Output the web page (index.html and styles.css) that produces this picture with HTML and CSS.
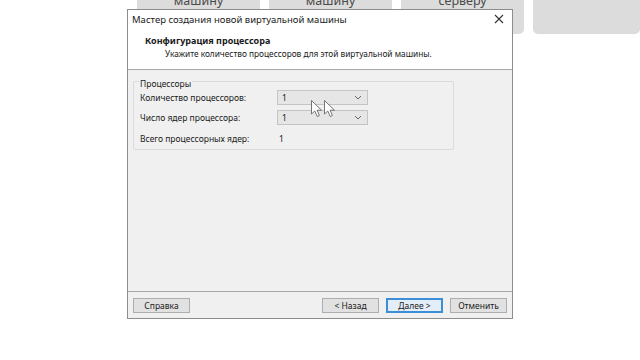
FILE: index.html
```html
<!DOCTYPE html>
<html lang="ru">
<head>
  <meta charset="UTF-8" />
  <title>Мастер создания новой виртуальной машины</title>
  <link rel="stylesheet" href="styles.css">
</head>
<body>

  <!-- плитки на заднем плане -->
  <div class="tiles">
    <div class="tile"><span>машину</span></div>
    <div class="tile"><span>машину</span></div>
    <div class="tile"><span>серверу</span></div>
    <div class="tile"></div>
  </div>

  <div class="wizard">
    <div class="wiz-title">
      <span>Мастер создания новой виртуальной машины</span>
      <svg class="wiz-close" width="10" height="10" viewBox="0 0 10 10">
        <path d="M1 1 L9 9 M9 1 L1 9" stroke="#333" stroke-width="1.1" fill="none"/>
      </svg>
    </div>

    <div class="wiz-head">
      <div class="wiz-head-title">Конфигурация процессора</div>
      <div class="wiz-head-sub">Укажите количество процессоров для этой виртуальной машины.</div>
    </div>

    <div class="wiz-body">
      <fieldset class="group">
        <legend>Процессоры</legend>
        <div class="row">
          <span class="row-label">Количество процессоров:</span>
          <div class="combo"><span>1</span><svg width="8" height="5" viewBox="0 0 8 5"><path d="M1 1 L4 4 L7 1" stroke="#666" fill="none"/></svg></div>
        </div>
        <div class="row">
          <span class="row-label">Число ядер процессора:</span>
          <div class="combo"><span>1</span><svg width="8" height="5" viewBox="0 0 8 5"><path d="M1 1 L4 4 L7 1" stroke="#666" fill="none"/></svg></div>
        </div>
        <div class="row">
          <span class="row-label">Всего процессорных ядер:</span>
          <span class="row-value">1</span>
        </div>
      </fieldset>
    </div>

    <div class="wiz-foot">
      <button class="btn">Справка</button>
      <span class="spacer"></span>
      <button class="btn">&lt; Назад</button>
      <button class="btn btn-default">Далее &gt;</button>
      <button class="btn">Отменить</button>
    </div>
  </div>

  <!-- два курсора поверх списков -->
  <svg class="cursor c1" width="12" height="18" viewBox="0 0 12 18">
    <path d="M0.5 0.5 L0.5 14 L3.8 11 L6.2 16.5 L8.4 15.5 L6.1 10.2 L10.5 10.2 Z" fill="#fff" stroke="#555" stroke-width="0.8"/>
  </svg>
  <svg class="cursor c2" width="12" height="18" viewBox="0 0 12 18">
    <path d="M0.5 0.5 L0.5 14 L3.8 11 L6.2 16.5 L8.4 15.5 L6.1 10.2 L10.5 10.2 Z" fill="#fff" stroke="#555" stroke-width="0.8"/>
  </svg>

</body>
</html>
```

FILE: styles.css
```css
* { box-sizing: border-box; margin: 0; padding: 0; }

html, body {
  width: 640px;
  height: 360px;
  overflow: hidden;
  background: #fff;
  font-family: "Noto Sans", "Open Sans", sans-serif;
  color: #1a1a1a;
}

body { position: relative; }

.tiles {
  display: flex;
  gap: 9px;
  padding-left: 137px;
}

.tile {
  width: 123px;
  height: 34px;
  background: #dcdcdc;
  border-radius: 0 0 5px 5px;
  text-align: center;
  overflow: hidden;
}

.tile:last-child { flex: 1; }

.tile span {
  display: block;
  margin-top: -6px;
  font-size: 12.5px;
  line-height: 14px;
  color: #4a4a4a;
}

.wizard {
  position: absolute;
  left: 127px;
  top: 9px;
  width: 386px;
  height: 310px;
  border: 1px solid #8c8c8c;
  background: #f0f0f0;
  display: flex;
  flex-direction: column;
  font-size: 8.5px;
}

.wiz-title {
  display: flex;
  align-items: center;
  justify-content: space-between;
  height: 18px;
  padding: 0 8px 0 4px;
  background: #fff;
  font-size: 9.5px;
}

.wiz-head {
  height: 42px;
  padding: 7px 0 0 17px;
  background: #fff;
  border-bottom: 1px solid #a8a8a8;
}

.wiz-head-title {
  font-size: 9px;
  font-weight: bold;
  line-height: 12px;
}

.wiz-head-sub {
  padding-left: 20px;
  font-size: 8.3px;
  line-height: 13px;
}

.wiz-body {
  flex: 1;
  padding: 6px 0 0 5px;
}

.group {
  width: 321px;
  height: 74px;
  border: 1px solid #dadada;
  border-radius: 2px;
  padding: 0 0 0 6px;
}

.group legend {
  margin-left: -1px;
  padding: 0 1px;
  line-height: 10px;
  transform: translateY(3px);
}

.row {
  display: flex;
  align-items: center;
  height: 20.5px;
}

.row:first-of-type { margin-top: 1px; }

.row-label { width: 137px; }

.combo {
  width: 91px;
  height: 15px;
  display: flex;
  align-items: center;
  justify-content: space-between;
  padding: 0 5px 0 4px;
  background: #e6e6e6;
  border: 1px solid #c4c4c4;
}

.row-value { padding-left: 2px; }

.wiz-foot {
  height: 27px;
  display: flex;
  align-items: center;
  gap: 7px;
  padding: 0 5px 0 5px;
  border-top: 1px solid #a8a8a8;
}

.spacer { flex: 1; }

.btn {
  width: 57px;
  height: 15px;
  font-family: inherit;
  font-size: 8.5px;
  color: #1a1a1a;
  background: #e1e1e1;
  border: 1px solid #adadad;
}

.btn-default {
  border: 2px solid #3c8fd6;
  background: #e4eef8;
}

.cursor { position: absolute; }
.c1 { left: 311px; top: 100px; }
.c2 { left: 324px; top: 100px; }
```
